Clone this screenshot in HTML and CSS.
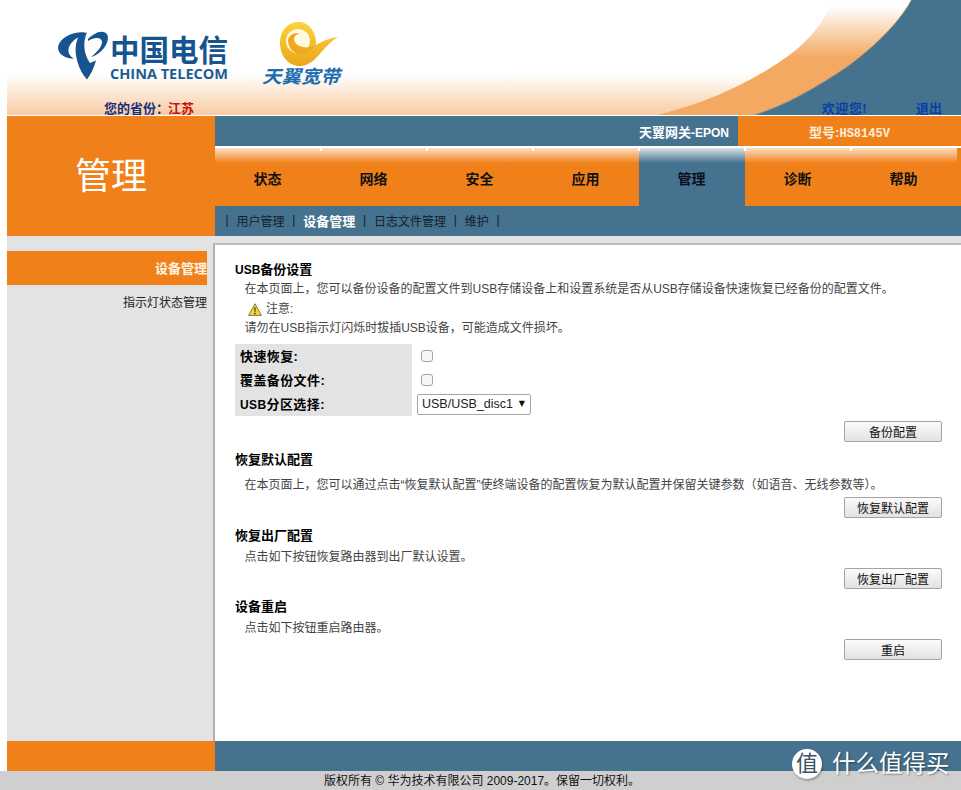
FILE: index.html
```html
<!DOCTYPE html>
<html lang="zh-CN">
<head>
<meta charset="utf-8">
<title>管理 - 设备管理</title>
<link rel="stylesheet" href="styles.css">
</head>
<body>
<div class="page">
  <header class="header">
    <svg class="header-art" viewBox="0 0 954 115" width="954" height="115" aria-hidden="true">
      <defs>
        <linearGradient id="sky" x1="0" y1="0" x2="0" y2="1">
          <stop offset="0.64" stop-color="#ffffff"/>
          <stop offset="1" stop-color="#f9cca3"/>
        </linearGradient>
        <linearGradient id="crescent" gradientUnits="userSpaceOnUse" x1="0" y1="6" x2="0" y2="58">
          <stop offset="0" stop-color="#ffffff"/>
          <stop offset="1" stop-color="#f3a961"/>
        </linearGradient>
      </defs>
      <rect width="954" height="115" fill="url(#sky)"/>
      <path fill="url(#crescent)" d="M826 0C813 32 790 52 760 70C728 89 695 104 650 115L746 115C780 105 810 87 840 67C873 43 896 17 905 0Z"/>
      <path fill="#44728f" stroke="#8f8a80" stroke-width="1" d="M905 -1C896 17 873 43 840 67C810 87 780 105 746 115.500L955 115.500L955 -1Z"/>
    </svg>
    <div class="logos">
      <svg class="logo-telecom" viewBox="0 0 172 52" width="172" height="52" role="img">
        <g class="logo-blue">
          <path d="M28 1.500C18 0 5 5 1.500 14C-1 22 8 28 17 27.500C12 25 10 20 12.500 15C15 10 20 6 26 5Z"/>
          <path d="M23 3L30 1.500C26 10 26 22 33 32L39 29.500C37 37 34 43 30 48.500C22 40 17 24 19 14C19.500 10 21 6 23 3Z"/>
          <path d="M31 8C36 3 43 -1 48 1.500C53 4 51 12 47 17C43 22 38 25 34 26C39 22 45 16 45 11C45 6 37 6 31 10Z"/>
          <text class="logo-cn" x="53" y="30" textLength="118" lengthAdjust="spacingAndGlyphs">中国电信</text>
          <text class="logo-en" x="53" y="48" textLength="118" lengthAdjust="spacingAndGlyphs">CHINA TELECOM</text>
        </g>
      </svg>
      <svg class="logo-tianyi" viewBox="0 0 80 72" width="80" height="72" role="img">
        <defs>
          <linearGradient id="gold" x1="0" y1="0" x2="0" y2="1">
            <stop offset="0" stop-color="#fbd33e"/>
            <stop offset="1" stop-color="#eda51a"/>
          </linearGradient>
        </defs>
        <path fill="url(#gold)" d="M39 6C27 5 19 15 19 27C19 41 29 51 40 50C52 49 58 38 65 31C69 27 73 23 77 21C68 22 60 26 55 29C56 18 49 7 39 6Z"/>
        <ellipse cx="37" cy="25" rx="12" ry="12" fill="#fffbe0"/>
        <path fill="#f0a820" d="M27 24C27 33 34 39 42 38C47 37 51 33 54 30C50 31 46 32 42 31C37 30 33 27 33 23C33 20 36 18 39 18C35 16 28 18 27 24Z"/>
        <text class="logo-tianyi-text" x="1" y="67" textLength="78" lengthAdjust="spacingAndGlyphs">天翼宽带</text>
      </svg>
    </div>
    <div class="header-bar">
      <div class="province">您的省份：<span class="province-name">江苏</span></div>
      <nav class="account">
        <a class="account-link account-welcome">欢迎您!</a>
        <a class="account-link">退出</a>
      </nav>
    </div>
  </header>

  <div class="band">
    <div class="band-title">管理</div>
    <div class="band-main">
      <div class="info-row">
        <div class="gateway"><span>天翼网关<span class="gateway-type">-EPON</span></span></div>
        <div class="model"><span>型号:<span class="model-num">HS8145V</span></span></div>
      </div>
      <nav class="tabs">
        <a class="tab">状态</a>
        <a class="tab">网络</a>
        <a class="tab">安全</a>
        <a class="tab">应用</a>
        <a class="tab tab-active">管理</a>
        <a class="tab">诊断</a>
        <a class="tab">帮助</a>
      </nav>
      <nav class="subnav">
        <span>|</span><a>用户管理</a>
        <span>|</span><a class="subnav-active">设备管理</a>
        <span>|</span><a>日志文件管理</a>
        <span>|</span><a>维护</a>
        <span>|</span>
      </nav>
    </div>
  </div>

  <div class="main">
    <aside class="sidebar">
      <a class="side-item side-active">设备管理</a>
      <a class="side-item">指示灯状态管理</a>
    </aside>
    <main class="panel">
      <section>
        <h2 class="title"><span class="latin">USB</span>备份设置</h2>
        <p class="desc indent">在本页面上，您可以备份设备的配置文件到USB存储设备上和设置系统是否从USB存储设备快速恢复已经备份的配置文件。</p>
        <p class="desc note">
          <svg class="warn" viewBox="0 0 14 13" width="14" height="13" aria-hidden="true">
            <path d="M7 .8L13.400 12.400H.6Z" fill="#f2d544" stroke="#8a7a2a" stroke-width="1"/>
            <path d="M6.300 4.500h1.400l-.3 4.600h-.8ZM6.300 9.800h1.400v1.400H6.300Z" fill="#3a3000"/>
          </svg>
          注意:
        </p>
        <p class="desc indent">请勿在USB指示灯闪烁时拔插USB设备，可能造成文件损坏。</p>
        <table class="form">
          <tr><th>快速恢复:</th><td><input class="check" type="checkbox"></td></tr>
          <tr><th>覆盖备份文件:</th><td><input class="check" type="checkbox"></td></tr>
          <tr><th><span class="latin">USB</span>分区选择:</th><td><span class="select-wrap"><select class="select"><option>USB/USB_disc1</option></select></span></td></tr>
        </table>
        <div class="actions actions-first"><button class="btn" type="button">备份配置</button></div>
      </section>
      <section class="block block-default">
        <h2 class="title">恢复默认配置</h2>
        <p class="desc indent">在本页面上，您可以通过点击“恢复默认配置”使终端设备的配置恢复为默认配置并保留关键参数（如语音、无线参数等）。</p>
        <div class="actions"><button class="btn" type="button">恢复默认配置</button></div>
      </section>
      <section class="block">
        <h2 class="title">恢复出厂配置</h2>
        <p class="desc indent">点击如下按钮恢复路由器到出厂默认设置。</p>
        <div class="actions"><button class="btn" type="button">恢复出厂配置</button></div>
      </section>
      <section class="block">
        <h2 class="title">设备重启</h2>
        <p class="desc indent">点击如下按钮重启路由器。</p>
        <div class="actions"><button class="btn" type="button">重启</button></div>
      </section>
    </main>
  </div>

  <div class="footer-band">
    <div class="footer-left"></div>
    <div class="footer-right"></div>
  </div>
</div>
<footer class="copyright">版权所有 © 华为技术有限公司 2009-2017。保留一切权利。</footer>
<div class="watermark">
  <span class="wm-badge">值</span>
  <span class="wm-text">什么值得买</span>
</div>
</body>
</html>
```
FILE: styles.css
```css
* { box-sizing: border-box; }
html, body { margin: 0; padding: 0; }
body {
  position: relative;
  width: 961px;
  height: 790px;
  overflow: hidden;
  background: #fff;
  font-family: "Liberation Sans", "Noto Sans CJK SC", sans-serif;
  font-size: 12px;
  color: #333;
}
.page { margin-left: 7px; width: 954px; }

/* header */
.header {
  position: relative;
  height: 116px;
  display: flex;
  flex-direction: column;
  justify-content: space-between;
  border-bottom: 1px solid #fff;
}
.header-art { position: absolute; left: 0; top: 0; display: block; }
.logos {
  position: relative;
  display: flex;
  align-items: flex-start;
  padding: 31px 0 0 50px;
  gap: 32px;
}
.logo-telecom, .logo-tianyi { display: block; overflow: visible; }
.logo-tianyi { margin-top: -15px; }
.logo-blue { fill: #15548f; }
.logo-cn { font: 700 30px "Noto Sans CJK SC", sans-serif; }
.logo-en { font: 700 14px "Open Sans", sans-serif; fill: #1b5e96; }
.logo-tianyi-text { font: italic 700 18px "Noto Sans CJK SC", sans-serif; fill: #1f6cae; }
.header-bar {
  position: relative;
  display: flex;
  justify-content: space-between;
  align-items: center;
  height: 15px;
  padding: 1px 19px 0 97px;
  font-weight: 700;
  font-size: 13px;
  line-height: 15px;
}
.province { color: #16307e; }
.province-name { color: #c8130f; margin-left: -1px; }
.account { display: flex; gap: 49px; }
.account-link { color: #0b3ea3; }
.account-welcome { letter-spacing: .5px; }

/* top band */
.band { display: flex; height: 120px; }
.band-title {
  width: 208px;
  display: flex;
  align-items: center;
  justify-content: center;
  background: #f0811a;
  color: #fff;
  font-size: 36px;
  font-weight: 400;
  padding-bottom: 6px;
}
.band-main { flex: 1; display: flex; flex-direction: column; min-width: 0; }
.info-row { display: flex; height: 30px; background: #44728f; }
.gateway {
  flex: 1;
  display: flex;
  align-items: center;
  justify-content: flex-end;
  padding-right: 9px;
  color: #fff;
  font-weight: 700;
  font-size: 13px;
}
.gateway-type { font-size: 12px; }
.model {
  width: 223px;
  display: flex;
  align-items: center;
  justify-content: center;
  background: #f0811a;
  color: #fdeedd;
  font-weight: 700;
  font-size: 13px;
}
.model-num { font-family: "Liberation Mono", monospace; font-size: 12px; }
.tabs {
  display: flex;
  height: 60px;
  padding-right: 4px;
  border-top: 2px solid #fff;
  background: #f0811a;
}
.tab {
  position: relative;
  flex: 1;
  display: flex;
  align-items: center;
  justify-content: center;
  padding: 2px 1px 0 0;
  background: linear-gradient(#fbe0c8, #f0811a 15px);
  color: #111;
  font-size: 14px;
  font-weight: 700;
}
.tab::before {
  content: "";
  position: absolute;
  left: -1px;
  top: 0;
  width: 2px;
  height: 3px;
  background: #fff;
}
.tab:first-child::before { display: none; }
.tab-active {
  background: linear-gradient(#dbe2e8, #44728f 15px);
  color: #0a0f1e;
}
.subnav {
  display: flex;
  align-items: center;
  gap: 7.800px;
  height: 30px;
  padding: 0 0 2px 10.500px;
  background: #44728f;
  color: #14202a;
  font-size: 12px;
}
.subnav-active { color: #fff; font-weight: 700; font-size: 13px; }

/* main */
.main { display: flex; height: 505px; background: #e3e3e3; }
.sidebar {
  width: 206px;
  padding: 15px 6px 0 0;
  color: #222;
}
.side-item {
  display: flex;
  align-items: center;
  justify-content: flex-end;
  height: 34px;
  padding-bottom: 2px;
}
.side-active {
  background: #f0811a;
  color: #fff4e4;
  font-weight: 700;
  font-size: 13px;
}
.panel {
  flex: 1;
  margin-top: 7px;
  padding: 15px 19px 0 20px;
  background: #fff;
  border-top: 2px solid #b9b9b9;
  border-left: 2px solid #b0b0b0;
}
.title {
  margin: 0;
  font-size: 13px;
  font-weight: 700;
  line-height: 20px;
  color: #000;
}
.latin { font-size: 12px; }
.desc {
  margin: 0;
  line-height: 19px;
  font-size: 12px;
  color: #444;
  white-space: nowrap;
}
.indent { padding-left: 9.500px; }
.note {
  display: flex;
  align-items: center;
  gap: 4px;
  height: 20px;
  line-height: 20px;
  padding-left: 13px;
}
.warn { display: block; }
.form {
  border-collapse: collapse;
  margin-top: 6px;
}
.form th {
  width: 177px;
  height: 24px;
  padding: 0 0 2px 5px;
  background: #e3e3e3;
  color: #000;
  font-size: 13px;
  font-weight: 700;
  letter-spacing: .4px;
  text-align: left;
}
.form td { padding: 0 0 0 5px; height: 24px; }
.check {
  display: block;
  appearance: none;
  width: 12px;
  height: 12px;
  margin: 0 0 1px 4px;
  background: #f6f6f6;
  border: 1px solid #a4a4a4;
  border-radius: 3px;
}
.select-wrap { position: relative; display: block; width: 114px; }
.select {
  display: block;
  appearance: none;
  width: 114px;
  height: 21px;
  padding: 0 0 0 4px;
  background: #fff;
  border: 1px solid #a6a6a6;
  border-radius: 2px;
  font: 12.500px "Liberation Sans", sans-serif;
  color: #222;
}
.select-wrap::after {
  content: "▼";
  position: absolute;
  right: 6px;
  top: 5px;
  font: 8px/10px "DejaVu Sans", sans-serif;
  color: #111;
}
.actions { display: flex; justify-content: flex-end; margin-top: 1px; }
.actions-first { margin-top: 5px; }
.btn {
  width: 98px;
  height: 21px;
  padding: 0;
  background: linear-gradient(#fbfbfb, #e2e2e2);
  border: 1px solid #a3a3a3;
  border-radius: 2px;
  font: 12px "Liberation Sans", "Noto Sans CJK SC", sans-serif;
  color: #111;
}
.block { margin-top: 8px; }
.block .desc { margin-top: 2px; }
.block-default .desc { margin-top: 6px; }
.block-default .actions { margin-top: 2px; }

/* footer */
.footer-band { display: flex; height: 30px; }
.footer-left { width: 208px; background: #f0811a; }
.footer-right { flex: 1; background: #44728f; }
.copyright {
  height: 19px;
  padding-left: 3px;
  background: #cfcfcf;
  color: #111;
  font-size: 12px;
  line-height: 20px;
  text-align: center;
}

/* watermark over the page */
.watermark {
  position: absolute;
  left: 792px;
  top: 749px;
  display: flex;
  align-items: center;
  gap: 10px;
}
.wm-badge {
  width: 30px;
  height: 30px;
  border-radius: 50%;
  background: #fff;
  color: #3d5566;
  font-size: 22px;
  line-height: 30px;
  text-align: center;
  box-shadow: 1px 2px 2px rgba(0,0,0,.25);
}
.wm-text {
  color: #fff;
  font-size: 23.500px;
  line-height: 30px;
  text-shadow: 1px 1px 2px rgba(0,0,0,.4);
}
```
